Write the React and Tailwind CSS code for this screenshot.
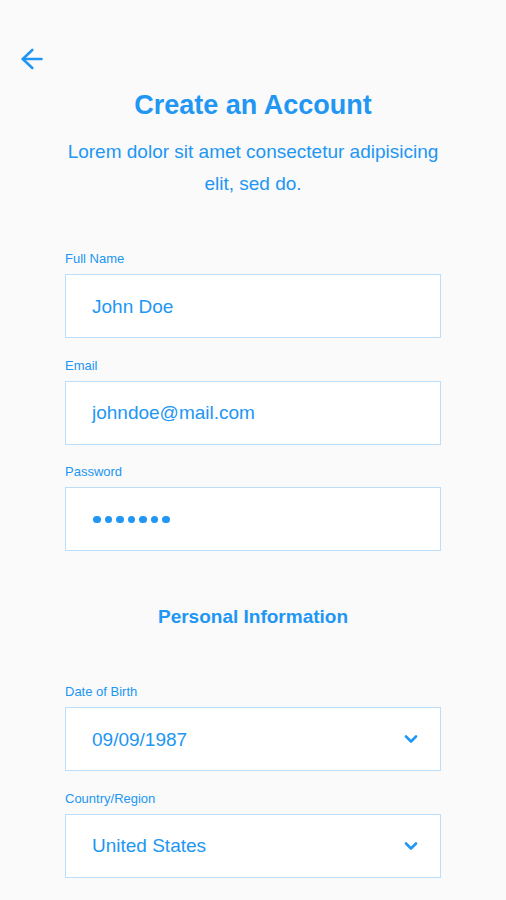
import React from "react";

const Chevron = () => (
  <svg width="14" height="10" viewBox="0 0 14 10" fill="none">
    <polyline points="2,2.5 7,7.5 12,2.5" stroke="#2196F3" strokeWidth="2.6" strokeLinecap="round" strokeLinejoin="round" />
  </svg>
);

function Field({ label, children, select, className = "" }) {
  return (
    <div className={"flex flex-col " + className}>
      <label className="text-[13px] leading-4 text-[#2196F3] mb-[7px]">{label}</label>
      <div className="h-16 border border-[#bbdefb] bg-white pl-[26px] pr-[22px] flex items-center justify-between">
        <div className="text-[19px] leading-7 pt-[1px] text-[#2196F3]">{children}</div>
        {select && <Chevron />}
      </div>
    </div>
  );
}

export default function App() {
  return (
    <div className="min-h-screen bg-[#fafafa] overflow-hidden" style={{ fontFamily: '"Liberation Sans", Arial, sans-serif' }}>
      <div className="pt-[47px] pl-[20px]">
        <svg width="24" height="24" viewBox="0 0 24 24" fill="none">
          <path d="M21.5 12H2.8" stroke="#2196F3" strokeWidth="2.6" strokeLinecap="round" />
          <path d="M12.3 3L2.8 12L12.3 21" stroke="#2196F3" strokeWidth="2.6" strokeLinecap="round" strokeLinejoin="round" />
        </svg>
      </div>
      <div className="w-[376px] mx-auto">
        <h1 className="mt-[18px] text-center text-[27px] leading-8 font-bold text-[#2196F3]">Create an Account</h1>
        <p className="mt-[15px] text-center text-[19px] leading-8 text-[#2196F3]">
          Lorem dolor sit amet consectetur adipisicing elit, sed do.
        </p>
        <div className="mt-[51px] flex flex-col">
          <Field label="Full Name">John Doe</Field>
          <Field label="Email" className="mt-[19.5px]">johndoe@mail.com</Field>
          <Field label="Password" className="mt-[19.5px]">
            <div className="flex items-center gap-[4px] pl-[1px] h-7">
              {[0, 1, 2, 3, 4, 5, 6].map((i) => (
                <span key={i} className="block w-[7.5px] h-[7.5px] rounded-full bg-[#2196F3]" />
              ))}
            </div>
          </Field>
          <h2 className="mt-[53.5px] text-center text-[19px] leading-6 font-bold text-[#2196F3]">Personal Information</h2>
          <Field label="Date of Birth" className="mt-[55.5px]" select>09/09/1987</Field>
          <Field label="Country/Region" className="mt-[19.5px]" select>United States</Field>
          <Field label="State" className="mt-[19.5px]" select>California</Field>
        </div>
      </div>
    </div>
  );
}
